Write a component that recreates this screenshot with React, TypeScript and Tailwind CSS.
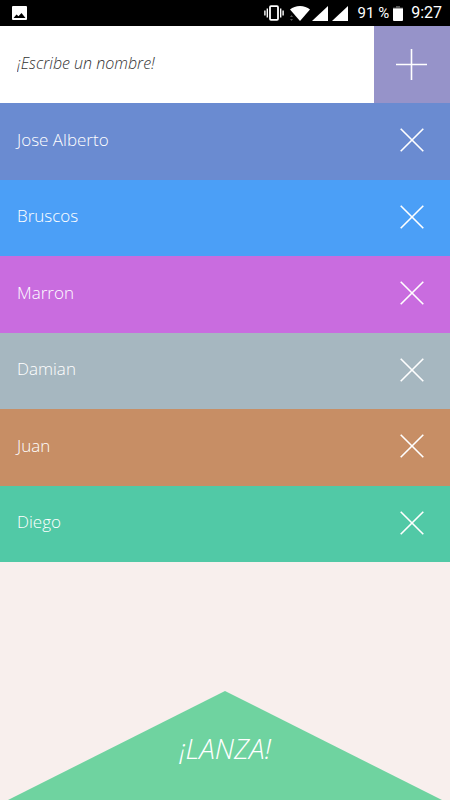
import React, { useState } from 'react';

interface Player {
    id: number;
    name: string;
    color: string;
}

const initialPlayers: Player[] = [
    { id: 1, name: 'Jose Alberto', color: 'bg-[#6a8bd1]' },
    { id: 2, name: 'Bruscos', color: 'bg-[#4b9ff7]' },
    { id: 3, name: 'Marron', color: 'bg-[#c96cdf]' },
    { id: 4, name: 'Damian', color: 'bg-[#a6b7c0]' },
    { id: 5, name: 'Juan', color: 'bg-[#c78e65]' },
    { id: 6, name: 'Diego', color: 'bg-[#51c9a6]' },
];

const rowColors = initialPlayers.map((p) => p.color);

const ImageIcon = (props: React.SVGProps<SVGSVGElement>) => (
    <svg {...props} viewBox="0 0 15 14"><rect width="15" height="14" rx="1" fill="#fff"/><path d="M1.5 12 4.500 8.500l2 1.700L9.500 7l4 5Z" fill="#000"/></svg>
);
const VibrateIcon = (props: React.SVGProps<SVGSVGElement>) => (
    <svg {...props} viewBox="0 0 20 16" fill="none" stroke="#fff" strokeWidth="1.4"><rect x="6" y="1.2" width="8" height="13.6" rx="1" strokeWidth="1.8"/><path d="M3.3 3.5v9M.9 5.5v5M16.7 3.5v9M19.1 5.5v5"/></svg>
);
const WifiIcon = (props: React.SVGProps<SVGSVGElement>) => (
    <svg {...props} viewBox="0 0 20 15" fill="#fff"><path d="M0 3.6C2.7 1.2 6.1 0 10 0s7.300 1.200 10 3.600L10 15Z"/><path d="M1.500 9 3 11H0ZM1.500 15 3 13H0Z" fill="#555"/></svg>
);
const SignalIcon = (props: React.SVGProps<SVGSVGElement>) => (
    <svg {...props} viewBox="0 0 16 15" fill="#fff"><path d="M16 0v15H0Z"/></svg>
);
const BatteryIcon = (props: React.SVGProps<SVGSVGElement>) => (
    <svg {...props} viewBox="0 0 10 15"><path d="M3 0h4v1.500h3V3H0V1.500h3Z" fill="#555"/><path d="M0 2.500h10V14a1 1 0 0 1-1 1H1a1 1 0 0 1-1-1Z" fill="#fff"/></svg>
);
const PlusIcon = (props: React.SVGProps<SVGSVGElement>) => (
    <svg {...props} viewBox="0 0 32 32" fill="none" stroke="currentColor" strokeWidth="1.6"><path d="M15.500 0v31M0 15.500h31"/></svg>
);
const CrossIcon = (props: React.SVGProps<SVGSVGElement>) => (
    <svg {...props} viewBox="0 0 24 24" fill="none" stroke="currentColor" strokeWidth="1.600"><path d="m.7.7 22.600 22.600M23.300.7.7 23.300"/></svg>
);

const StatusBar = () => (
    <header className="flex h-[26px] items-center bg-black pl-3 pr-2 font-[Roboto,sans-serif] text-base font-normal text-white">
        <ImageIcon className="h-3.5 w-[15px]" />
        <div className="ml-auto flex items-center">
            <VibrateIcon className="h-4 w-5" />
            <WifiIcon className="ml-1.5 h-[15px] w-5" />
            <SignalIcon className="ml-0.5 h-[15px] w-4" />
            <SignalIcon className="ml-1 h-[15px] w-4" />
            <span className="ml-2.5 text-[15px]">91 %</span>
            <BatteryIcon className="ml-1 h-[15px] w-2.5" />
            <span className="ml-2">9:27</span>
        </div>
    </header>
);

const App: React.FC = () => {
    const [players, setPlayers] = useState<Player[]>(initialPlayers);
    const [name, setName] = useState('');
    const [winner, setWinner] = useState<number | null>(null);

    const addPlayer = (e: React.FormEvent) => {
        e.preventDefault();
        if (!name.trim()) return;
        const id = Math.max(0, ...players.map((p) => p.id)) + 1;
        setPlayers([...players, { id, name: name.trim(), color: rowColors[(id - 1) % rowColors.length] }]);
        setName('');
    };

    const removePlayer = (id: number) => setPlayers(players.filter((p) => p.id !== id));

    const launch = () => {
        if (players.length) setWinner(players[Math.floor(Math.random() * players.length)].id);
    };

    return (
        <div className="flex min-h-screen flex-col bg-[#f8efed] font-['Open_Sans','Noto_Sans',sans-serif] font-light">
            <StatusBar />
            <form onSubmit={addPlayer} className="flex h-[77px] bg-white">
                <input
                    type="text"
                    aria-label="Nombre"
                    placeholder="¡Escribe un nombre!"
                    value={name}
                    onChange={(e) => setName(e.target.value)}
                    className="min-w-0 flex-1 px-[17px] pb-1 text-base italic text-[#333] outline-none placeholder:text-[#333]"
                />
                <button type="submit" aria-label="Añadir" className="flex w-19 items-center justify-center bg-[#9693c9] text-white">
                    <PlusIcon className="h-8 w-8" />
                </button>
            </form>

            <ul className="grid min-h-[459px] auto-rows-[minmax(76px,1fr)] text-[17px] text-white">
                {players.map((player) => (
                    <li key={player.id} className={`flex items-center justify-between pl-[17px] ${player.color} ${winner === player.id ? 'font-bold' : ''}`}>
                        <span className="pb-1">{player.name}</span>
                        <button onClick={() => removePlayer(player.id)} aria-label={`Quitar ${player.name}`} className="flex h-full w-19 items-center justify-center pb-0.5">
                            <CrossIcon className="h-6 w-6" />
                        </button>
                    </li>
                ))}
            </ul>

            <button
                onClick={launch}
                className="mt-auto w-full bg-[#6fd3a0] pb-8 pt-[37px] text-[28px]/10 italic text-white [clip-path:polygon(50%_0,calc(100%-8px)_100%,8px_100%)]"
            >
                ¡LANZA!
            </button>
        </div>
    );
};

export default App;
